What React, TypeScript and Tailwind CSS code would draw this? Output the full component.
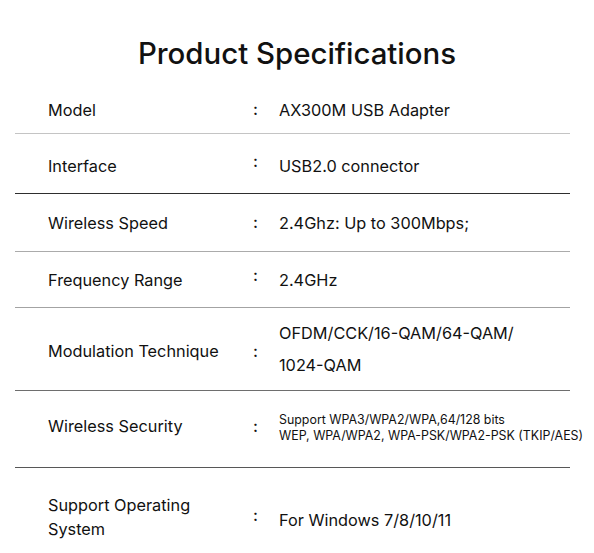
import React from "react";

interface Spec {
  label: string[];
  value: React.ReactNode;
  height: string;
  border: string;
  pad?: string;
  colon?: string;
}

const specs: Spec[] = [
  {
    label: ["Model"],
    value: <span>AX300M USB Adapter</span>,
    height: "h-[48px]",
    border: "border-[#c4c4c4]",
  },
  {
    label: ["Interface"],
    value: <span>USB2.0 connector</span>,
    height: "h-[60px]",
    border: "border-[#2e2e2e]",
    pad: "pt-[4px]",
    colon: "-translate-y-[4px]",
  },
  {
    label: ["Wireless Speed"],
    value: <span>2.4Ghz: Up to 300Mbps;</span>,
    height: "h-[58px]",
    border: "border-[#ababab]",
  },
  {
    label: ["Frequency Range"],
    value: <span>2.4GHz</span>,
    height: "h-[56px]",
    border: "border-[#a3a3a3]",
    colon: "-translate-y-[4px]",
  },
  {
    label: ["Modulation Technique"],
    value: (
      <div className="leading-[32px] -translate-y-[2px]">
        <div>OFDM/CCK/16-QAM/64-QAM/</div>
        <div>1024-QAM</div>
      </div>
    ),
    height: "h-[83px]",
    border: "border-[#6e6e6e]",
    pad: "pt-[4px]",
  },
  {
    label: ["Wireless Security"],
    value: (
      <div className="text-[12.4px] leading-[16px] translate-y-[2px]">
        <div>Support WPA3/WPA2/WPA,64/128 bits</div>
        <div className="whitespace-nowrap">
          WEP, WPA/WPA2, WPA-PSK/WPA2-PSK (TKIP/AES)
        </div>
      </div>
    ),
    height: "h-[77px]",
    border: "border-[#575757]",
    pad: "pb-[6px]",
  },
  {
    label: ["Support Operating", "System"],
    value: <span className="inline-block translate-y-[3px]">For Windows 7/8/10/11</span>,
    height: "h-[98px]",
    border: "border-transparent",
    colon: "-translate-y-[1px]",
  },
];

export default function App() {
  return (
    <div
      className="w-[594px] h-[553px] overflow-hidden bg-white text-[#111]"
      style={{ fontFamily: "Inter, 'Liberation Sans', sans-serif" }}
    >
      <div className="h-[86px] pt-[36px]">
        <h1 className="text-center text-[29.4px] leading-[36px] font-medium">
          Product Specifications
        </h1>
      </div>

      <div className="ml-[15px] w-[555px]">
        {specs.map((spec) => (
          <div
            key={spec.label.join(" ")}
            className={`flex items-center border-b ${spec.height} ${spec.border} ${spec.pad ?? ""}`}
          >
            <div className="w-[238px] shrink-0 pl-[33px] text-[16.3px] leading-[24px]">
              {spec.label.map((line) => (
                <div key={line}>{line}</div>
              ))}
            </div>
            <div
              className={`w-[26px] shrink-0 text-[16.3px] font-medium ${spec.colon ?? ""}`}
            >
              :
            </div>
            <div className="min-w-0 flex-1 text-[16.3px] leading-[24px]">
              {spec.value}
            </div>
          </div>
        ))}
      </div>
    </div>
  );
}
